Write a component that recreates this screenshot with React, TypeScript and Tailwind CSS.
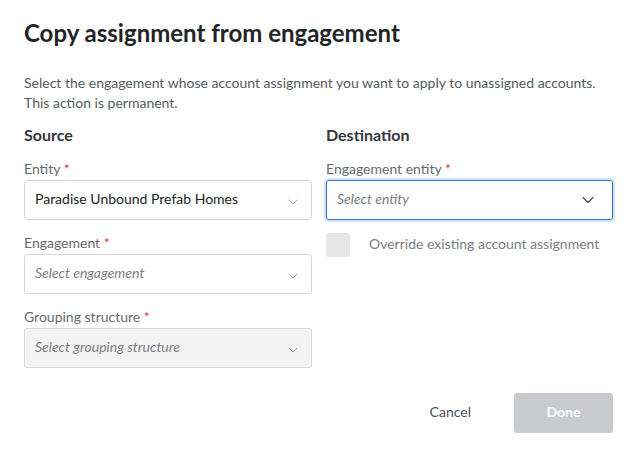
import { ChevronDown } from "lucide-react";

function Label({ text }: { text: string }) {
  return (
    <div className="text-[14px] leading-5 text-[#666a70] mb-[1px]">
      {text} <span className="text-[#d9363e]">*</span>
    </div>
  );
}

function Select({
  value,
  placeholder,
  disabled,
  focused,
}: {
  value?: string;
  placeholder?: string;
  disabled?: boolean;
  focused?: boolean;
}) {
  const base = "flex items-center justify-between h-10 rounded-[3px] pl-[10px] pr-[10px] text-[14px]";
  if (focused) {
    return (
      <div className={base + " border border-[#3d72c9] ring-2 ring-[#cfe0f7] pr-[14px]"}>
        <span className="italic text-[#7a7e85] mb-1">{placeholder}</span>
        <ChevronDown size={20} strokeWidth={1.5} className="text-[#50555c]" />
      </div>
    );
  }
  return (
    <div
      className={
        base +
        " border border-[#d6d8db] " +
        (disabled ? "bg-[#f3f3f4]" : "bg-white")
      }
    >
      {value ? (
        <span className="text-[#1b1d26] mb-1">{value}</span>
      ) : (
        <span className="italic text-[#7a7e85] mb-1">{placeholder}</span>
      )}
      <ChevronDown size={16} strokeWidth={1.5} className="text-[#a3a7ad] mt-1" />
    </div>
  );
}

export default function App() {
  return (
    <div className="w-[637px] h-[453px] bg-white font-['Lato',sans-serif] pl-6 pr-6 pt-[17px]">
      <h1 className="text-[24px] leading-8 font-bold text-[#222428]">
        Copy assignment from engagement
      </h1>
      <p className="mt-6 text-[14px] leading-5 text-[#555a60]">
        Select the engagement whose account assignment you want to apply to unassigned accounts.
        <br />
        This action is permanent.
      </p>

      <div className="mt-[10px] grid grid-cols-[288px_287px] gap-x-[14px]">
        <div>
          <h2 className="text-[16px] leading-6 font-bold text-[#33363b]">Source</h2>
          <div className="mt-3">
            <Label text="Entity" />
            <Select value="Paradise Unbound Prefab Homes" />
          </div>
          <div className="mt-[13px]">
            <Label text="Engagement" />
            <Select placeholder="Select engagement" />
          </div>
          <div className="mt-[13px]">
            <Label text="Grouping structure" />
            <Select placeholder="Select grouping structure" disabled />
          </div>
        </div>

        <div>
          <h2 className="text-[16px] leading-6 font-bold text-[#33363b]">Destination</h2>
          <div className="mt-3">
            <Label text="Engagement entity" />
            <Select placeholder="Select entity" focused />
          </div>
          <div className="mt-[13px] flex items-center">
            <div className="w-6 h-6 rounded-[3px] bg-[#e6e6e7]" />
            <span className="ml-[19px] -mt-[3px] text-[14px] leading-5 text-[#7a7e85]">
              Override existing account assignment
            </span>
          </div>
        </div>
      </div>

      <div className="mt-[25px] flex justify-end items-center">
        <button className="text-[14px] text-[#4b5058] mr-[43px] pb-1">Cancel</button>
        <button className="w-[99px] h-10 rounded-[3px] bg-[#c8cacd] text-white font-bold text-[14px] pb-1">
          Done
        </button>
      </div>
    </div>
  );
}
